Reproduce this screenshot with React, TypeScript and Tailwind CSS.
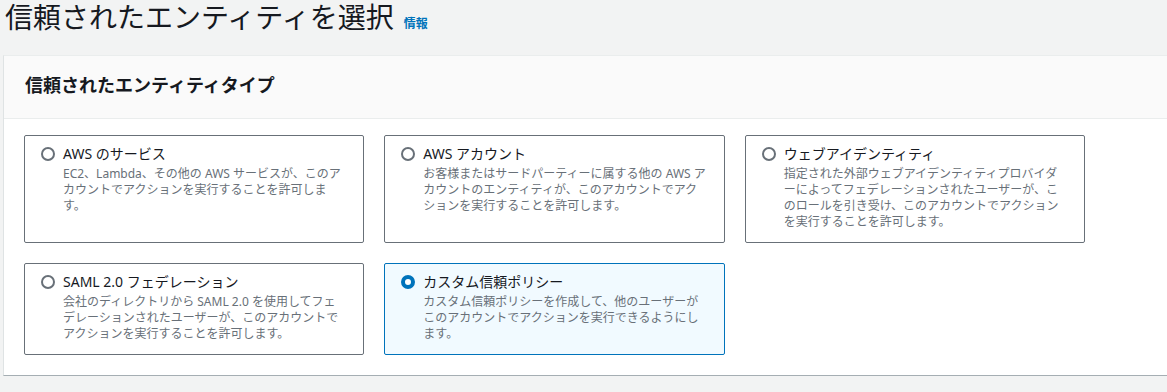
import React, { useState } from "react";

const FONT = "font-['Noto_Sans','Noto_Sans_CJK_JP',sans-serif]";

const OPTIONS = [
  {
    id: "aws-service",
    title: "AWS のサービス",
    desc: "EC2、Lambda、その他の AWS サービスが、このアカウントでアクションを実行することを許可します。",
  },
  {
    id: "aws-account",
    title: "AWS アカウント",
    desc: "お客様またはサードパーティーに属する他の AWS アカウントのエンティティが、このアカウントでアクションを実行することを許可します。",
  },
  {
    id: "web-identity",
    title: "ウェブアイデンティティ",
    desc: "指定された外部ウェブアイデンティティプロバイダーによってフェデレーションされたユーザーが、このロールを引き受け、このアカウントでアクションを実行することを許可します。",
  },
  {
    id: "saml",
    title: "SAML 2.0 フェデレーション",
    desc: "会社のディレクトリから SAML 2.0 を使用してフェデレーションされたユーザーが、このアカウントでアクションを実行することを許可します。",
  },
  {
    id: "custom",
    title: "カスタム信頼ポリシー",
    desc: "カスタム信頼ポリシーを作成して、他のユーザーがこのアカウントでアクションを実行できるようにします。",
  },
];

const App = () => {
  const [selected, setSelected] = useState("custom");

  return (
    <div lang="ja" className={`min-h-screen w-[1167px] overflow-hidden bg-[#f2f3f3] ${FONT}`}>
      {/* Page title */}
      <div className="flex h-[55px] items-baseline pt-px pl-[5px]">
        <h1 className="text-[28px] leading-[32px] font-normal text-[#16191f]">
          信頼されたエンティティを選択
        </h1>
        <a href="#" className="ml-[10px] text-[12px] font-bold text-[#0073bb]">
          情報
        </a>
      </div>

      {/* Container */}
      <div className="ml-[3px] border-t border-l border-b border-t-[#eaeded] border-l-[#dfe3e4] border-b-[#a5aeb3] bg-white">
        <div className="border-b border-[#eaeded] bg-[#fafafa] pt-[17px] pb-[21px] pl-[21px]">
          <h2 className="text-[18px] leading-[24px] font-bold text-[#16191f]">
            信頼されたエンティティタイプ
          </h2>
        </div>

        <div className="px-5 pt-4 pb-5">
          <div className="grid w-[1061px] grid-cols-3 gap-x-5 gap-y-5">
            {OPTIONS.map((opt) => {
              const active = selected === opt.id;
              return (
                <label
                  key={opt.id}
                  onClick={() => setSelected(opt.id)}
                  className={`flex cursor-pointer items-start gap-2 rounded-[2px] border pt-2 pr-4 pb-3 pl-4
                    ${active ? "border-[#0073bb] bg-[#f1faff]" : "border-[#687078] bg-white"}
                  `}
                >
                  <span
                    className={`mt-[3px] h-[14px] w-[14px] flex-shrink-0 rounded-full bg-white
                      ${active ? "border-[4px] border-[#0073bb]" : "border-2 border-[#687078]"}
                    `}
                  />
                  <div className="min-w-0 flex-1">
                    <div className="text-[14px] leading-[20px] text-[#16191f]">{opt.title}</div>
                    <p className="mt-[2px] text-[12px] leading-[16px] text-[#687078]">{opt.desc}</p>
                  </div>
                </label>
              );
            })}
          </div>
        </div>
      </div>
    </div>
  );
};

export default App;
